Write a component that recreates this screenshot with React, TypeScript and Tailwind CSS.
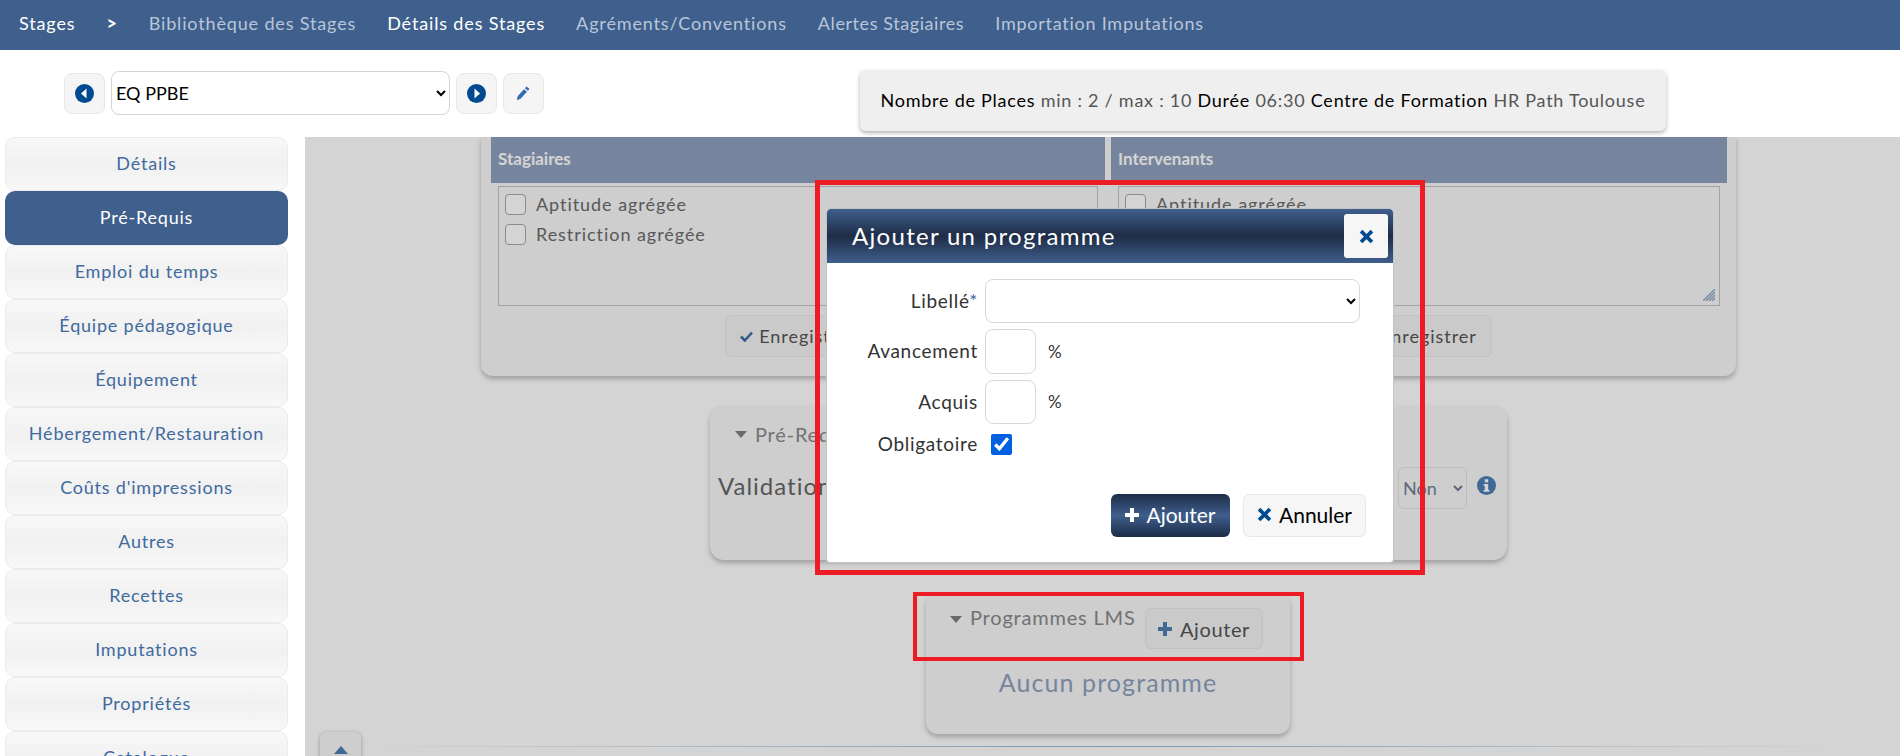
import React from "react";

const navItems = [
  { label: "Bibliothèque des Stages", className: "text-[#b9c6d8]" },
  { label: "Détails des Stages", className: "text-white" },
  { label: "Agréments/Conventions", className: "text-[#b9c6d8]" },
  { label: "Alertes Stagiaires", className: "text-[#b9c6d8] tracking-[0.58px]" },
  { label: "Importation Imputations", className: "text-[#b9c6d8] tracking-[0.75px]" },
];

const sideItems = [
  "Détails",
  "Pré-Requis",
  "Emploi du temps",
  "Équipe pédagogique",
  "Équipement",
  "Hébergement/Restauration",
  "Coûts d'impressions",
  "Autres",
  "Recettes",
  "Imputations",
  "Propriétés",
  "Catalogue",
];

const ArrowCircle = ({ dir }: { dir: "left" | "right" }) => (
  <svg width="19" height="19" viewBox="0 0 19 19">
    <circle cx="9.5" cy="9.5" r="9.5" fill="#004a92" />
    {dir === "left" ? (
      <path d="M11.5 4.5v10l-5.5-5z" fill="#fff" />
    ) : (
      <path d="M7.5 4.5v10l5.5-5z" fill="#fff" />
    )}
  </svg>
);

const CrossIcon = ({ color = "#004a92", size = 15 }: { color?: string; size?: number }) => (
  <svg width={size} height={size} viewBox="0 0 16 16">
    <path
      d="M3.6 0.8 8 5.2l4.4-4.4 2.8 2.8L10.8 8l4.4 4.4-2.8 2.8L8 10.8l-4.4 4.4-2.8-2.8L5.2 8 .8 3.6z"
      fill={color}
    />
  </svg>
);

const PlusIcon = ({ color = "#fff", size = 14 }: { color?: string; size?: number }) => (
  <svg width={size} height={size} viewBox="0 0 14 14">
    <path d="M5 0h4v5h5v4H9v5H5V9H0V5h5z" fill={color} />
  </svg>
);

const Caret = () => (
  <svg width="12" height="7" viewBox="0 0 12 7">
    <path d="M0 0h12L6 7z" fill="#808080" />
  </svg>
);

const CheckRow = ({ label }: { label: string }) => (
  <div className="flex h-[30px] items-center gap-[10px] pl-[6px] text-[18px] tracking-[0.95px] text-[#6b6b6b]">
    <span className="h-[21px] w-[21px] rounded-[4px] border border-[#a8a8a8] bg-white" />
    {label}
  </div>
);

const PrereqColumn = ({ title, wide }: { title: string; wide?: boolean }) => (
  <div className={wide ? "w-[616px]" : "w-[614px]"}>
    <div className="flex h-[46px] items-center bg-[#8fa1bd] pb-[2px] pl-[7px] text-[17px] font-bold text-white">
      {title}
    </div>
    <div className="relative mx-[7px] mt-[3px] h-[120px] border border-[#c4c4c4] bg-[#f8f8f8] pt-[2px]">
      <CheckRow label="Aptitude agrégée" />
      <CheckRow label="Restriction agrégée" />
      {wide && (
        <svg className="absolute bottom-[4px] right-[4px]" width="12" height="12" viewBox="0 0 12 12">
          <path d="M12 0 0 12M12 3 3 12M12 6 6 12M12 9 9 12" stroke="#8fa6c4" strokeWidth="1.4" />
        </svg>
      )}
    </div>
    <div className="mt-[9px] flex justify-center">
      <button className="flex h-[42px] w-[146px] items-center justify-center gap-[6px] rounded-[6px] border border-[#e8e8e8] bg-[#f3f3f3] text-[18px] tracking-[0.95px] text-[#555]">
        <svg width="13" height="11" viewBox="0 0 13 11">
          <path d="M1 5.5 4.8 9.5 12 1.5" fill="none" stroke="#3f6ea5" strokeWidth="2.6" />
        </svg>
        Enregistrer
      </button>
    </div>
  </div>
);

const fieldLabel = "w-[151px] text-right text-[19px] tracking-[0.7px] text-[#333]";

export default function App() {
  return (
    <div className="relative h-[756px] w-[1900px] overflow-hidden bg-white font-[Lato,sans-serif]">
      <nav className="flex h-[50px] items-center gap-[31px] bg-[#3f5f8d] pb-[4px] pl-[19px] text-[18px] tracking-[0.85px]">
        <span className="text-white">Stages</span>
        <span className="font-bold text-white">&gt;</span>
        {navItems.map((item) => (
          <span key={item.label} className={item.className}>
            {item.label}
          </span>
        ))}
      </nav>

      <div className="flex h-[87px]">
        <div className="ml-[64px] mt-[21px] flex h-[44px] items-center gap-[6px]">
          <button className="flex h-[41px] w-[41px] items-center justify-center rounded-[8px] border border-[#e8e8e8] bg-[#f5f5f5]">
            <ArrowCircle dir="left" />
          </button>
          <select className="h-[44px] w-[339px] rounded-[8px] border border-[#d4d4d4] bg-white text-[18px] text-black">
            <option>EQ PPBE</option>
          </select>
          <button className="flex h-[41px] w-[41px] items-center justify-center rounded-[8px] border border-[#e8e8e8] bg-[#f5f5f5]">
            <ArrowCircle dir="right" />
          </button>
          <button className="flex h-[41px] w-[41px] items-center justify-center rounded-[8px] border border-[#e8e8e8] bg-[#f5f5f5]">
            <svg width="15" height="16" viewBox="0 0 15 16">
              <path d="M10.5 1.5 13.5 4l-1.6 1.8-3-2.6zM8 4.2l3 2.6-6.5 7L.8 15.2l.9-3.9z" fill="#2f6db0" />
            </svg>
          </button>
        </div>
        <div className="ml-[316px] mt-[20px] flex h-[61px] w-[806px] items-center justify-center rounded-[6px] bg-[#efefef] text-[18px] tracking-[0.75px] text-[#555] shadow-[0_2px_4px_rgba(0,0,0,0.3)]">
          <span className="text-black">Nombre de Places&nbsp;</span>min : 2 / max : 10
          <span className="text-black">&nbsp;Durée&nbsp;</span>06:30
          <span className="text-black">&nbsp;Centre de Formation&nbsp;</span>HR Path Toulouse
        </div>
      </div>

      <div className="flex h-[619px]">
        <aside className="flex w-[305px] flex-col pl-[5px]">
          {sideItems.map((label) => (
            <div
              key={label}
              className={
                label === "Pré-Requis"
                  ? "flex h-[54px] w-[283px] shrink-0 items-center justify-center rounded-[10px] bg-[#3f5f8d] pb-[2px] text-[18px] tracking-[0.8px] text-white"
                  : "flex h-[54px] w-[283px] shrink-0 items-center justify-center rounded-[10px] border border-[#ebebeb] bg-linear-to-b from-[#f8f8f8] via-[#f1f1f1] to-[#f8f8f8] pb-[2px] text-[18px] tracking-[0.8px] text-[#3f6a9f]"
              }
            >
              {label}
            </div>
          ))}
        </aside>

        <main className="relative flex-1 overflow-hidden">
          <section className="ml-[176px] h-[239px] w-[1255px] rounded-b-[12px] bg-[#f8f8f8] pl-[10px] shadow-[0_3px_5px_rgba(0,0,0,0.25)]">
            <div className="flex gap-[6px]">
              <PrereqColumn title="Stagiaires" />
              <PrereqColumn title="Intervenants" wide />
            </div>
          </section>

          <section className="ml-[405px] mt-[30px] h-[154px] w-[797px] rounded-[14px] bg-[#f8f8f8] shadow-[0_3px_5px_rgba(0,0,0,0.25)]">
            <div className="flex items-center gap-[8px] pl-[25px] pt-[13px] text-[20px] tracking-[0.8px] text-[#8a8a8a]">
              <Caret />
              Pré-Requis
            </div>
            <div className="mt-[18px] flex items-center pl-[8px] pr-[11px]">
              <span className="mb-[4px] text-[24px] tracking-[1px] text-[#666]">Validation</span>
              <select className="ml-auto h-[42px] w-[69px] rounded-[6px] border border-[#e4e4e4] bg-[#f8f8f8] text-[18px] text-[#6f7f96]">
                <option>Non</option>
              </select>
              <svg className="mb-[6px] ml-[10px]" width="19" height="19" viewBox="0 0 19 19">
                <circle cx="9.5" cy="9.5" r="9.5" fill="#4f7fb5" />
                <rect x="7.8" y="3.2" width="3.4" height="3.2" fill="#fff" />
                <path d="M6.6 8h4.6v6h1.2v1.8H6.6V14h1.2v-4.2H6.6z" fill="#fff" />
              </svg>
            </div>
          </section>

          <section className="ml-[621px] mt-[33px] h-[141px] w-[364px] rounded-[12px] bg-[#f8f8f8] shadow-[0_3px_5px_rgba(0,0,0,0.25)]">
            <div className="flex items-start pl-[24px] pt-[15px]">
              <span className="mt-[8px]">
                <Caret />
              </span>
              <span className="ml-[8px] mt-[-6px] w-[175px] whitespace-nowrap text-[20px] tracking-[0.8px] text-[#8a8a8a]">
                Programmes LMS
              </span>
              <button className="flex h-[41px] w-[118px] items-center justify-center gap-[8px] rounded-[6px] border border-[#e8e8e8] bg-[#f3f3f3] text-[20px] tracking-[0.6px] text-[#555]">
                <PlusIcon color="#4f7fb5" />
                Ajouter
              </button>
            </div>
            <p className="mt-[15px] text-center text-[25px] tracking-[1.1px] text-[#8fa1bd]">
              Aucun programme
            </p>
          </section>

          <div className="ml-[15px] mt-[-2px] flex items-start">
            <button className="flex h-[41px] w-[41px] items-start justify-center rounded-[6px] bg-[#f8f8f8] pt-[14px] shadow-[0_1px_4px_rgba(0,0,0,0.3)]">
              <svg width="14" height="8" viewBox="0 0 14 8">
                <path d="M7 0l7 8H0z" fill="#4f7fb5" />
              </svg>
            </button>
            <div className="mt-[14px] h-px w-[1490px] bg-linear-to-r from-transparent via-[#94b8d6] to-transparent" />
          </div>

          <div className="absolute inset-0 bg-black/[0.17]" />

          <div className="absolute left-[521px] top-[71px] h-[355px] w-[568px] rounded-[4px] border border-[#c4c4c4] bg-white">
            <header className="flex h-[54px] items-center justify-between rounded-t-[4px] bg-linear-to-b from-[#3f5f8d] via-[#1e2d47] to-[#3f5f8d] pl-[25px] pr-[5px]">
              <h2 className="pb-[1px] text-[24px] tracking-[1.3px] text-white">Ajouter un programme</h2>
              <button className="flex h-[44px] w-[44px] items-center justify-center rounded-[3px] bg-[#f6f6f6]">
                <CrossIcon />
              </button>
            </header>

            <div className="pt-[16px]">
              <div className="flex items-center gap-[7px]">
                <label className={fieldLabel}>
                  Libellé<span className="text-[#3f6a9f]">*</span>
                </label>
                <select className="h-[44px] w-[375px] rounded-[8px] border border-[#d8d8d8] bg-white" />
              </div>
              <div className="mt-[6px] flex items-center gap-[7px]">
                <label className={fieldLabel}>Avancement</label>
                <input className="h-[45px] w-[51px] rounded-[8px] border border-[#d8d8d8]" />
                <span className="ml-[5px] text-[17px] text-[#333]">%</span>
              </div>
              <div className="mt-[6px] flex items-center gap-[7px]">
                <label className={fieldLabel}>Acquis</label>
                <input className="h-[44px] w-[51px] rounded-[8px] border border-[#d8d8d8]" />
                <span className="ml-[5px] text-[17px] text-[#333]">%</span>
              </div>
              <div className="mt-[10px] flex h-[21px] items-center gap-[7px]">
                <label className={fieldLabel}>Obligatoire</label>
                <input
                  type="checkbox"
                  defaultChecked
                  className="ml-[6px] h-[21px] w-[21px] accent-[#0060df]"
                />
              </div>
            </div>

            <div className="mt-[39px] flex justify-end gap-[13px] pr-[27px]">
              <button className="flex h-[43px] w-[119px] items-center justify-center gap-[7px] rounded-[6px] bg-linear-to-b from-[#1e2d47] via-[#3f5f8d] to-[#1e2d47] pb-[2px] text-[21px] text-white">
                <PlusIcon />
                Ajouter
              </button>
              <button className="flex h-[43px] w-[123px] items-center justify-center gap-[7px] rounded-[6px] border border-[#e8e8e8] bg-[#f6f6f6] pb-[2px] text-[21px] text-black">
                <CrossIcon />
                Annuler
              </button>
            </div>
          </div>
        </main>
      </div>

      <div className="absolute left-[815px] top-[180px] h-[395px] w-[610px] border-[5px] border-[#ed1c24]" />
      <div className="absolute left-[913px] top-[592px] h-[69px] w-[391px] border-[4px] border-[#ed1c24]" />
    </div>
  );
}
